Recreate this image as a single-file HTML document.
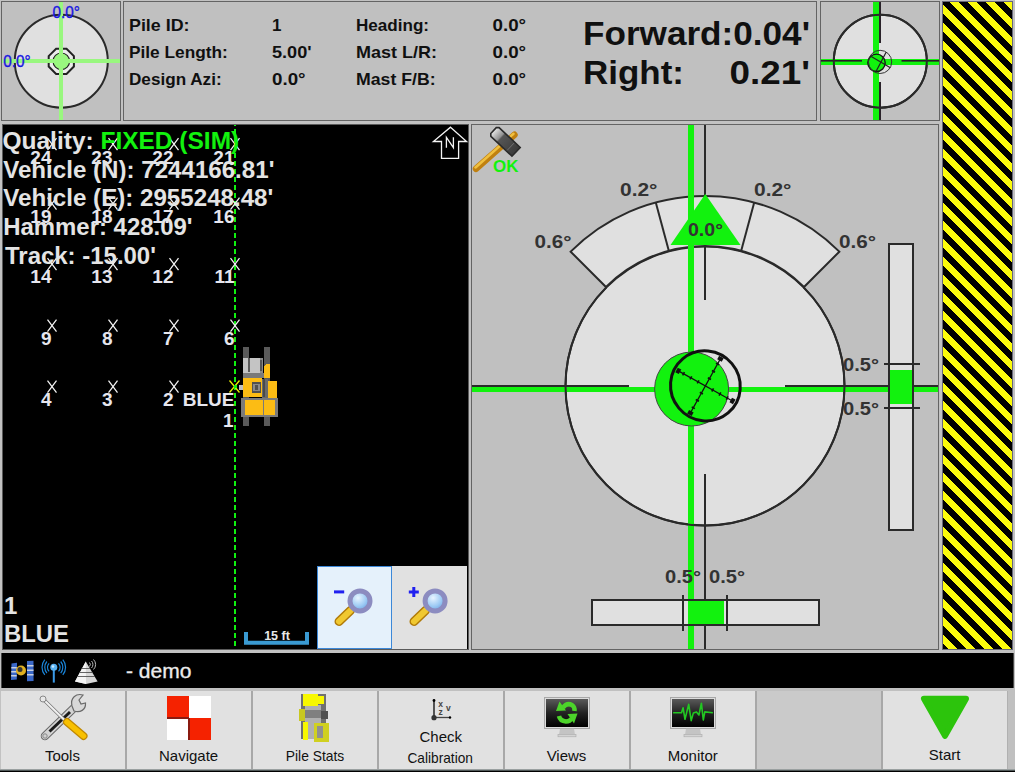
<!DOCTYPE html>
<html><head><meta charset="utf-8">
<style>
html,body{margin:0;padding:0;background:#c2c2c2;width:1015px;height:772px;overflow:hidden}
svg{display:block}
text{font-family:"Liberation Sans",sans-serif}
</style></head>
<body>
<svg width="1015" height="772" viewBox="0 0 1015 772" shape-rendering="crispEdges">
<defs>
<pattern id="haz" patternUnits="userSpaceOnUse" width="18" height="18" x="929" y="0">
<rect width="18" height="18" fill="#000"/>
<polygon points="0,0 9,0 18,9 18,18 0,0" fill="#fcfc0c"/>
<polygon points="0,9 9,18 0,18" fill="#fcfc0c"/>
</pattern>
</defs>
<rect x="0" y="0" width="1015" height="772" fill="#c2c2c2"/>

<!-- TOP PANEL 1 -->
<g id="p1">
<rect x="1.5" y="1.5" width="119" height="119" fill="#c0c0c0" stroke="#646464" stroke-width="1"/>
<circle cx="61.3" cy="61.2" r="46.5" fill="#e0e0e0" stroke="#2a2a2a" stroke-width="2" shape-rendering="auto"/>
<g shape-rendering="auto">
<polygon points="66.5,48.7 73.9,56.1 73.9,66.5 66.5,73.9 56.1,73.9 48.7,66.5 48.7,56.1 56.1,48.7" fill="#ececec" stroke="#222" stroke-width="2"/>
<circle cx="61.3" cy="61.3" r="8.3" fill="#99f77f" stroke="#222" stroke-width="1.1"/>
</g>
<rect x="59" y="2" width="4" height="118" fill="#99f77f"/>
<rect x="2" y="59" width="118" height="4" fill="#99f77f"/>
<text x="52.5" y="18.3" font-size="17" fill="#1818e0" stroke="#1818e0" stroke-width="0.35" textLength="27.5" lengthAdjust="spacingAndGlyphs" shape-rendering="auto">0.0°</text>
<text x="3.2" y="67" font-size="17" fill="#1818e0" stroke="#1818e0" stroke-width="0.35" textLength="27.5" lengthAdjust="spacingAndGlyphs" shape-rendering="auto">0.0°</text>
</g>


<!-- TOP PANEL 2 -->
<g id="p2" fill="#101010" font-weight="bold" font-size="17" shape-rendering="auto">
<rect x="123.5" y="1.5" width="693" height="119" fill="#c0c0c0" stroke="#646464" stroke-width="1" shape-rendering="crispEdges"/>
<text x="129" y="30.7" textLength="60.5" lengthAdjust="spacingAndGlyphs">Pile ID:</text>
<text x="129" y="57.8" textLength="98.8" lengthAdjust="spacingAndGlyphs">Pile Length:</text>
<text x="129" y="85" textLength="92.6" lengthAdjust="spacingAndGlyphs">Design Azi:</text>
<text x="272" y="30.7">1</text>
<text x="272" y="57.8" textLength="39.6" lengthAdjust="spacingAndGlyphs">5.00'</text>
<text x="272" y="85" textLength="33.6" lengthAdjust="spacingAndGlyphs">0.0°</text>
<text x="356" y="30.7" textLength="73" lengthAdjust="spacingAndGlyphs">Heading:</text>
<text x="356" y="57.8" textLength="81" lengthAdjust="spacingAndGlyphs">Mast L/R:</text>
<text x="356" y="85" textLength="79.6" lengthAdjust="spacingAndGlyphs">Mast F/B:</text>
<text x="492.5" y="30.7" textLength="33.6" lengthAdjust="spacingAndGlyphs">0.0°</text>
<text x="492.5" y="57.8" textLength="33.6" lengthAdjust="spacingAndGlyphs">0.0°</text>
<text x="492.5" y="85" textLength="33.6" lengthAdjust="spacingAndGlyphs">0.0°</text>
<text x="583" y="44.5" font-size="34" textLength="227" lengthAdjust="spacingAndGlyphs">Forward:0.04'</text>
<text x="583" y="84" font-size="34" textLength="101" lengthAdjust="spacingAndGlyphs">Right:</text>
<text x="729.5" y="84" font-size="34" textLength="80.5" lengthAdjust="spacingAndGlyphs">0.21'</text>
</g>

<!-- TOP PANEL 3 -->
<g id="p3">
<rect x="820.5" y="1.5" width="119" height="119" fill="#c0c0c0" stroke="#646464" stroke-width="1"/>
<circle cx="880.3" cy="61.2" r="46.5" fill="#e0e0e0" stroke="#2a2a2a" stroke-width="2" shape-rendering="auto"/>
<rect x="873" y="2" width="6" height="118" fill="#12f20e"/>
<rect x="821" y="59" width="118" height="6" fill="#12f20e"/>
<rect x="879" y="2" width="2" height="41" fill="#2a222a"/>
<rect x="879" y="82" width="2" height="38" fill="#2a222a"/>
<g shape-rendering="auto">
<rect x="821" y="60" width="41" height="1.6" fill="#2a1a2a"/>
<rect x="901.5" y="60" width="37.5" height="1.6" fill="#2a1a2a"/>
</g>
<circle cx="880.3" cy="61.2" r="46.5" fill="none" stroke="#2a2a2a" stroke-width="2" shape-rendering="auto"/>
<g shape-rendering="auto">
<circle cx="876.5" cy="62.8" r="8.7" fill="#12f20e" stroke="#151515" stroke-width="1.4"/>
<circle cx="880.1" cy="61.9" r="11.6" fill="none" stroke="#333" stroke-width="1"/>
<line x1="870.4" y1="55.9" x2="890.4" y2="67.7" stroke="#222" stroke-width="1.2"/>
<line x1="886.1" y1="52.3" x2="875.6" y2="72.2" stroke="#222" stroke-width="1.2"/>
</g>
</g>

<!-- HAZARD -->
<rect x="942.5" y="1.5" width="70" height="648" fill="url(#haz)" stroke="#686878" stroke-width="1"/>


<!-- MAP PANEL -->
<g id="map">
<rect x="2" y="124" width="467" height="526" fill="#5a5a5a"/>
<rect x="3" y="125" width="465" height="524" fill="#000"/>
<line x1="235" y1="125" x2="235" y2="649" stroke="#10f010" stroke-width="2" stroke-dasharray="5 3" stroke-dashoffset="4"/>
<g stroke="#f4f4f4" stroke-width="1.25" fill="none" shape-rendering="auto"><path d="M47.5,138.2 L56.5,150.2 M56.5,138.2 L47.5,150.2"/><path d="M108.5,138.2 L117.5,150.2 M117.5,138.2 L108.5,150.2"/><path d="M169.5,138.2 L178.5,150.2 M178.5,138.2 L169.5,150.2"/><path d="M230.5,138.2 L239.5,150.2 M239.5,138.2 L230.5,150.2"/><path d="M47.5,197.5 L56.5,209.5 M56.5,197.5 L47.5,209.5"/><path d="M108.5,197.5 L117.5,209.5 M117.5,197.5 L108.5,209.5"/><path d="M169.5,197.5 L178.5,209.5 M178.5,197.5 L169.5,209.5"/><path d="M230.5,197.5 L239.5,209.5 M239.5,197.5 L230.5,209.5"/><path d="M47.5,258 L56.5,270 M56.5,258 L47.5,270"/><path d="M108.5,258 L117.5,270 M117.5,258 L108.5,270"/><path d="M169.5,258 L178.5,270 M178.5,258 L169.5,270"/><path d="M230.5,258 L239.5,270 M239.5,258 L230.5,270"/><path d="M47.5,319.5 L56.5,331.5 M56.5,319.5 L47.5,331.5"/><path d="M108.5,319.5 L117.5,331.5 M117.5,319.5 L108.5,331.5"/><path d="M169.5,319.5 L178.5,331.5 M178.5,319.5 L169.5,331.5"/><path d="M230.5,319.5 L239.5,331.5 M239.5,319.5 L230.5,331.5"/><path d="M47.5,380.7 L56.5,392.7 M56.5,380.7 L47.5,392.7"/><path d="M108.5,380.7 L117.5,392.7 M117.5,380.7 L108.5,392.7"/><path d="M169.5,380.7 L178.5,392.7 M178.5,380.7 L169.5,392.7"/></g>
<g fill="#e6e6ee" font-size="19" font-weight="bold" text-anchor="end" shape-rendering="auto"><text x="51.5" y="163.5">24</text><text x="112.5" y="163.5">23</text><text x="173.5" y="163.5">22</text><text x="234.5" y="163.5">21</text><text x="51.5" y="222.8">19</text><text x="112.5" y="222.8">18</text><text x="173.5" y="222.8">17</text><text x="234.5" y="222.8">16</text><text x="51.5" y="283.3">14</text><text x="112.5" y="283.3">13</text><text x="173.5" y="283.3">12</text><text x="234.5" y="283.3">11</text><text x="51.5" y="344.8">9</text><text x="112.5" y="344.8">8</text><text x="173.5" y="344.8">7</text><text x="234.5" y="344.8">6</text><text x="51.5" y="406.0">4</text><text x="112.5" y="406.0">3</text><text x="173.5" y="406.0">2</text><text x="234.5" y="406.0" font-weight="bold">BLUE</text><text x="233.5" y="427.3">1</text></g>
<g fill="#e4e4e4" font-size="23.5" font-weight="bold" shape-rendering="auto">
<text x="2.5" y="149.3" textLength="236.7" lengthAdjust="spacingAndGlyphs">Quality: <tspan fill="#12f20e">FIXED (SIM)</tspan></text>
<text x="3.2" y="178.3" textLength="271.2" lengthAdjust="spacingAndGlyphs">Vehicle (N): 7244166.81'</text>
<text x="3.2" y="206.3" textLength="270.1" lengthAdjust="spacingAndGlyphs">Vehicle (E): 2955248.48'</text>
<text x="3.2" y="235.3" textLength="189.3" lengthAdjust="spacingAndGlyphs">Hammer: 428.09'</text>
<text x="5" y="264.2" textLength="150.9" lengthAdjust="spacingAndGlyphs">Track: -15.00'</text>
<text x="3.9" y="613.5" font-size="24">1</text>
<text x="3.9" y="641.7" font-size="23.5" textLength="65.1" lengthAdjust="spacingAndGlyphs">BLUE</text>
</g>
<g fill="none" stroke="#f4f4f4" stroke-width="1.3" shape-rendering="auto">
<path d="M450.5,127.2 L466.6,141.5 L458.6,141.5 L458.6,158.4 L441.5,158.4 L441.5,141.5 L433.4,141.5 Z"/>
<path d="M446.4,147.8 L446.4,137.4 L453.4,147.6 L453.4,137.2"/>
</g>
<path d="M246,632 L246,642.8 L307,642.8 L307,632" fill="none" stroke="#3a9ad2" stroke-width="4" shape-rendering="auto"/>
<text x="277" y="640.2" font-size="12.5" font-weight="bold" fill="#e8e8e8" text-anchor="middle" shape-rendering="auto">15 ft</text>
<rect x="317.5" y="566.5" width="74" height="82" fill="#e5f1fb" stroke="#3c88d8" stroke-width="1"/>
<rect x="392" y="566" width="75" height="83" fill="#e1e1e1"/>
</g>

<g id="vehicle">
<rect x="243" y="347" width="6" height="79" fill="#5a5a5a"/>
<rect x="264" y="347" width="6" height="79" fill="#5a5a5a"/>
<rect x="243" y="358" width="19.5" height="15.5" fill="#c4c4c4"/>
<rect x="248" y="358" width="2" height="14" fill="#5a5a5a"/>
<rect x="259.5" y="358" width="3" height="15.5" fill="#8a8a8a"/>
<rect x="260" y="360" width="1.5" height="11" fill="#555"/>
<rect x="243" y="373" width="27" height="5" fill="#7a7a7a"/>
<polygon points="263.5,367 266.5,364 270,364 270,377.5 263.5,377.5" fill="#fcbc14"/>
<rect x="243" y="378" width="19" height="18.5" fill="#fcbc14"/>
<rect x="261.5" y="378.5" width="6" height="19" fill="#6a6a6a"/>
<rect x="263" y="379" width="1.5" height="18" fill="#4a4a4a"/>
<rect x="267.5" y="380.7" width="9.5" height="17" fill="#fcbc14"/>
<rect x="251.5" y="382" width="9.5" height="11" fill="#505050"/>
<rect x="253" y="384" width="6.5" height="7" fill="#8a8a8a"/>
<rect x="254.5" y="385" width="3.5" height="5" fill="#505050"/>
<rect x="241" y="397.5" width="36.5" height="19.5" fill="#7a7a7a"/>
<rect x="244.5" y="399.5" width="30" height="15.5" fill="#fcbc14"/>
<rect x="263" y="399.5" width="1.2" height="15.5" fill="#7a7a7a"/>
<rect x="238.6" y="385.2" width="4.4" height="4.5" fill="#c0c0c0"/>
<g stroke="#e8f000" stroke-width="1.3" shape-rendering="auto">
<path d="M229.5,380.5 L239.5,392.5 M239.5,380.5 L229.5,392.5"/>
</g>
<rect x="233.5" y="385" width="3" height="3" fill="#10f010"/>
</g>

<g id="dial">
<rect x="471.5" y="124.5" width="467" height="525" fill="#c0c0c0" stroke="#646464" stroke-width="1"/>
<g shape-rendering="auto">
<circle cx="705" cy="386" r="139.5" fill="#e0e0e0" stroke="#2a2a2a" stroke-width="2"/>
</g>
<rect x="704" y="125" width="2" height="175" fill="#2a2a2a"/>
<rect x="704" y="474" width="2" height="175" fill="#2a2a2a"/>
<rect x="472" y="385" width="157" height="2" fill="#2a2a2a"/>
<rect x="785" y="385" width="153" height="2" fill="#2a2a2a"/>
<g shape-rendering="auto">
<path d="M570.65,251.65 A190,190 0 0 1 839.35,251.65 L804,287 A140,140 0 0 0 606,287 Z" fill="#e0e0e0" stroke="#2a2a2a" stroke-width="2" stroke-linejoin="miter"/>
<line x1="655.8" y1="202.5" x2="668.8" y2="250.8" stroke="#2a2a2a" stroke-width="2"/>
<line x1="754.2" y1="202.5" x2="741.2" y2="250.8" stroke="#2a2a2a" stroke-width="2"/>
</g>
<rect x="688" y="125" width="6" height="524" fill="#12f20e"/>
<rect x="472" y="387" width="466" height="5" fill="#12f20e"/>
<path d="M803.6,287.4 A139.5,139.5 0 1 1 606.4,287.4" fill="none" stroke="#2a2a2a" stroke-width="2" shape-rendering="auto"/>
<polygon points="705.3,194 740.5,245 670.5,245" fill="#12f20e" shape-rendering="auto"/>
<g font-weight="bold" font-size="18.5" fill="#333" shape-rendering="auto">
<text x="620" y="196" textLength="37.5" lengthAdjust="spacingAndGlyphs">0.2°</text>
<text x="754" y="196" textLength="37.5" lengthAdjust="spacingAndGlyphs">0.2°</text>
<text x="534.5" y="248" textLength="37" lengthAdjust="spacingAndGlyphs">0.6°</text>
<text x="839" y="248" textLength="37" lengthAdjust="spacingAndGlyphs">0.6°</text>
<text x="688" y="235.7" font-size="18.5" textLength="35" lengthAdjust="spacingAndGlyphs">0.0°</text>
<text x="843" y="371" textLength="36" lengthAdjust="spacingAndGlyphs">0.5°</text>
<text x="843" y="415" textLength="36" lengthAdjust="spacingAndGlyphs">0.5°</text>
<text x="665" y="583.4" textLength="36" lengthAdjust="spacingAndGlyphs">0.5°</text>
<text x="709" y="583.4" textLength="36" lengthAdjust="spacingAndGlyphs">0.5°</text>
</g>
<g shape-rendering="auto">
<circle cx="691.6" cy="389" r="37" fill="#12f20e" stroke="#444" stroke-width="1"/>
<g transform="translate(705.4,385.9)">
<ellipse cx="0" cy="0" rx="35.3" ry="34.6" transform="rotate(50)" fill="none" stroke="#111" stroke-width="3"/>
<g transform="rotate(29)">
<line x1="-32" y1="0" x2="32" y2="0" stroke="#111" stroke-width="1.2"/>
<line x1="0" y1="-32" x2="0" y2="32" stroke="#111" stroke-width="1.2"/>
<g fill="#111"><rect x="-33" y="-2.6" width="4" height="5.2"/><rect x="29" y="-2.6" width="4" height="5.2"/><rect x="-2.6" y="-33" width="5.2" height="4"/><rect x="-2.6" y="29" width="5.2" height="4"/></g>
<g stroke="#111" stroke-width="1.6"><line x1="-8.3" y1="-1.8" x2="-8.3" y2="1.8"/><line x1="-1.8" y1="-8.3" x2="1.8" y2="-8.3"/><line x1="8.3" y1="-1.8" x2="8.3" y2="1.8"/><line x1="-1.8" y1="8.3" x2="1.8" y2="8.3"/><line x1="-16.6" y1="-1.8" x2="-16.6" y2="1.8"/><line x1="-1.8" y1="-16.6" x2="1.8" y2="-16.6"/><line x1="16.6" y1="-1.8" x2="16.6" y2="1.8"/><line x1="-1.8" y1="16.6" x2="1.8" y2="16.6"/><line x1="-25" y1="-1.8" x2="-25" y2="1.8"/><line x1="-1.8" y1="-25" x2="1.8" y2="-25"/><line x1="25" y1="-1.8" x2="25" y2="1.8"/><line x1="-1.8" y1="25" x2="1.8" y2="25"/></g>
</g>
</g>
</g>
<rect x="889" y="244" width="24" height="286" fill="#e0e0e0" stroke="#2a2a2a" stroke-width="2"/>
<rect x="890" y="370" width="22" height="34" fill="#12f20e"/>
<rect x="884" y="363" width="36" height="2" fill="#2a2a2a"/>
<rect x="884" y="407" width="36" height="2" fill="#2a2a2a"/>
<rect x="592" y="600" width="227" height="25" fill="#e0e0e0" stroke="#2a2a2a" stroke-width="2"/>
<rect x="688" y="601" width="36" height="23" fill="#12f20e"/>
<rect x="682" y="595" width="2" height="36" fill="#2a2a2a"/>
<rect x="726" y="595" width="2" height="36" fill="#2a2a2a"/>
<text x="493" y="172" font-size="17" font-weight="bold" fill="#12f20e" shape-rendering="auto">OK</text>
</g>

<!-- STATUS BAR -->
<rect x="1" y="653" width="1013" height="36" fill="#4a4a4a"/>
<rect x="2" y="653" width="1011" height="35" fill="#000"/>
<text x="126" y="678.2" font-size="19.5" fill="#ececec" stroke="#ececec" stroke-width="0.3" textLength="65.5" lengthAdjust="spacingAndGlyphs">- demo</text>


<!-- TOOLBAR -->
<g id="toolbar">
<rect x="0" y="688" width="1015" height="3" fill="#c0c0c0"/>
<rect x="1" y="691" width="1007" height="78" fill="#e1e1e1"/>
<rect x="1008" y="688" width="7" height="81" fill="#c0c0c0"/>
<rect x="756" y="691" width="126" height="78" fill="#cacaca"/>
<rect x="125" y="691" width="2" height="78" fill="#a8a8a8"/>
<rect x="251" y="691" width="2" height="78" fill="#a8a8a8"/>
<rect x="377" y="691" width="2" height="78" fill="#a8a8a8"/>
<rect x="503" y="691" width="2" height="78" fill="#a8a8a8"/>
<rect x="629" y="691" width="2" height="78" fill="#a8a8a8"/>
<rect x="755" y="691" width="2" height="78" fill="#a8a8a8"/>
<rect x="881" y="691" width="2" height="78" fill="#a8a8a8"/>
<rect x="1007" y="691" width="1" height="78" fill="#b0b0b0"/>
<rect x="0" y="769" width="1015" height="1" fill="#9aa0a0"/>
<rect x="0" y="770" width="1015" height="1" fill="#505858"/>
<rect x="0" y="771" width="1015" height="1" fill="#000"/>
<g font-size="15" fill="#111" text-anchor="middle" shape-rendering="auto">
<text x="62.4" y="760.5">Tools</text>
<text x="188.6" y="760.6">Navigate</text>
<text x="315" y="760.7" textLength="58.5" lengthAdjust="spacingAndGlyphs">Pile Stats</text>
<text x="440.8" y="742.4">Check</text>
<text x="440.2" y="762.5" textLength="65.5" lengthAdjust="spacingAndGlyphs">Calibration</text>
<text x="566.5" y="760.7">Views</text>
<text x="692.8" y="760.7">Monitor</text>
<text x="944.6" y="759.6">Start</text>
</g>
</g>

<g id="icons" shape-rendering="auto">
<defs>
<linearGradient id="gold" x1="0" y1="0" x2="1" y2="1">
<stop offset="0" stop-color="#f8d050"/><stop offset="0.5" stop-color="#e0a020"/><stop offset="1" stop-color="#a06010"/>
</linearGradient>
<linearGradient id="headg" x1="0" y1="0" x2="1" y2="0">
<stop offset="0" stop-color="#e8e8e8"/><stop offset="0.3" stop-color="#909090"/><stop offset="0.35" stop-color="#555"/><stop offset="1" stop-color="#3a3a3a"/>
</linearGradient>
<linearGradient id="scr" x1="0" y1="0" x2="0" y2="1">
<stop offset="0" stop-color="#5a5a5a"/><stop offset="0.5" stop-color="#222"/><stop offset="1" stop-color="#000"/>
</linearGradient>
<radialGradient id="glass" cx="0.4" cy="0.35" r="0.7">
<stop offset="0" stop-color="#e8f4ff"/><stop offset="0.6" stop-color="#9ccaf4"/><stop offset="1" stop-color="#6aa0e0"/>
</radialGradient>
<linearGradient id="yhandle" x1="0" y1="0" x2="1" y2="0">
<stop offset="0" stop-color="#c89010"/><stop offset="0.4" stop-color="#ffe060"/><stop offset="1" stop-color="#b07a08"/>
</linearGradient>
</defs>
<!-- hammer -->
<line x1="476" y1="168.8" x2="514.5" y2="134.8" stroke="#c08010" stroke-width="6.5" stroke-linecap="round"/>
<line x1="475.5" y1="167.5" x2="513.5" y2="133.8" stroke="#f0c040" stroke-width="2.5" stroke-linecap="round"/>
<g transform="translate(504.8,141.2) rotate(43.3)">
<polygon points="-15.5,-4 -13.5,-6 15.5,-6 15.5,6 -13.5,6 -15.5,4" fill="url(#headg)" stroke="#2a2a2a" stroke-width="1.6"/>
<line x1="8" y1="-5" x2="8" y2="5" stroke="#777" stroke-width="0.8"/>
</g>
<!-- zoom out magnifier -->
<g>
<line x1="339" y1="621.5" x2="350.5" y2="610.5" stroke="#b07a08" stroke-width="9" stroke-linecap="round"/>
<line x1="339" y1="621.5" x2="350.5" y2="610.5" stroke="#f0c830" stroke-width="6" stroke-linecap="round"/>
<circle cx="360" cy="600.9" r="10" fill="url(#glass)" stroke="#8c8cc0" stroke-width="5"/>
<rect x="334" y="590.4" width="10.2" height="3" fill="#2020f0"/>
</g>
<g>
<line x1="414" y1="621.5" x2="425.5" y2="610.5" stroke="#b07a08" stroke-width="9" stroke-linecap="round"/>
<line x1="414" y1="621.5" x2="425.5" y2="610.5" stroke="#f0c830" stroke-width="6" stroke-linecap="round"/>
<circle cx="435.1" cy="600.9" r="10" fill="url(#glass)" stroke="#8c8cc0" stroke-width="5"/>
<rect x="408.8" y="590.5" width="10" height="3" fill="#2020f0"/>
<rect x="412.3" y="587" width="3" height="10" fill="#2020f0"/>
</g>
<!-- status icons -->
<g>
<polygon points="11.5,663.5 17,662.8 16.8,679.5 11,680" fill="#3a68c8"/>
<polygon points="27,661 33.5,660.8 33.6,681 27,681.2" fill="#3a68c8"/>
<g fill="#c8d0e0"><rect x="11.3" y="667" width="5.5" height="1.5"/><rect x="11.2" y="671" width="5.5" height="1.5"/><rect x="11.1" y="675" width="5.6" height="1.5"/>
<rect x="27" y="665" width="6.5" height="1.5"/><rect x="27" y="669.5" width="6.5" height="1.5"/><rect x="27" y="674" width="6.5" height="1.5"/></g>
<circle cx="21" cy="670.5" r="5" fill="#e0b020"/>
<circle cx="20" cy="669.5" r="2.5" fill="#333"/>
</g>
<g fill="none" stroke="#1a84d8" stroke-width="1.2"><path d="M49.1,663.3 A6.2,6.2 0 0 0 49.1,671.3"/><path d="M58.5,663.3 A6.2,6.2 0 0 1 58.5,671.3"/><path d="M46.9,661.5 A9.0,9.0 0 0 0 46.9,673.1"/><path d="M60.7,661.5 A9.0,9.0 0 0 1 60.7,673.1"/><path d="M44.8,659.7 A11.8,11.8 0 0 0 44.8,674.9"/><path d="M62.8,659.7 A11.8,11.8 0 0 1 62.8,674.9"/></g>
<line x1="53.8" y1="668" x2="53.8" y2="682.6" stroke="#3a9ae8" stroke-width="2"/>
<circle cx="53.8" cy="667.3" r="3.5" fill="#58b0f0"/>
<circle cx="53" cy="666.5" r="1.3" fill="#c8e8ff"/>
<g>
<polygon points="85.8,661.5 97.6,681.6 86,684 75,681.6" fill="#d8d8d8"/>
<polygon points="85.8,661.5 86,684 75,681.6" fill="#f4f4f4"/>
<g stroke="#555" stroke-width="0.9"><line x1="81.5" y1="668.5" x2="90" y2="668.5"/><line x1="79.5" y1="672.5" x2="92.5" y2="672.5"/><line x1="77.5" y1="676.5" x2="95" y2="676.5"/></g>
<g fill="none" stroke="#bbb" stroke-width="1"><path d="M89.5,662.5 A3,3 0 0 1 89.5,666.5"/><path d="M91.5,661 A5,5 0 0 1 91.5,668"/><path d="M93.5,659.5 A7,7 0 0 1 93.5,669.5"/></g>
</g>
<!-- tools -->
<g>
<line x1="45" y1="736" x2="76" y2="706" stroke="#6a6a6a" stroke-width="8.5" stroke-linecap="round"/>
<line x1="45" y1="736" x2="76" y2="706" stroke="#d4d4d4" stroke-width="6.5" stroke-linecap="round"/>
<line x1="49.5" y1="731.5" x2="70" y2="712" stroke="#1a1a1a" stroke-width="3"/>
<circle cx="45" cy="736" r="2.2" fill="#d0d0d0" stroke="#888" stroke-width="1"/>
<path d="M72,706 C70,698 76,693 83,695 L79,700 L81,704 L85.5,703 C86,710 80,713 74,711 Z" fill="#d8d8d8" stroke="#6a6a6a" stroke-width="1.2"/>
<line x1="43" y1="699" x2="66" y2="721.5" stroke="#777" stroke-width="3.5" stroke-linecap="round"/>
<line x1="43" y1="699" x2="66" y2="721.5" stroke="#f0f0f0" stroke-width="2" stroke-linecap="round"/>
<circle cx="43" cy="699" r="3" fill="#e8e8e8" stroke="#888" stroke-width="1"/>
<line x1="67" y1="722" x2="83.5" y2="736" stroke="#c08800" stroke-width="8" stroke-linecap="round"/>
<line x1="67" y1="722" x2="83.5" y2="736" stroke="#f8c000" stroke-width="5.5" stroke-linecap="round"/>
</g>
<!-- navigate -->
<g shape-rendering="crispEdges">
<rect x="167" y="696" width="22" height="22" fill="#f52200"/>
<rect x="189" y="696" width="22" height="22" fill="#ffffff"/>
<rect x="167" y="718" width="22" height="22" fill="#ffffff"/>
<rect x="189" y="718" width="22" height="22" fill="#f52200"/>
<rect x="188" y="718" width="2" height="22" fill="#8a1a10"/>
<rect x="167" y="717" width="22" height="2" fill="#8a1a10"/>
</g>
<!-- pile stats -->
<g shape-rendering="crispEdges">
<rect x="301" y="694.3" width="25" height="44.8" fill="#707070"/>
<rect x="305" y="705" width="16" height="34" fill="#b0b0b0"/>
<rect x="302.8" y="694.3" width="15" height="11.4" fill="#f8f800"/>
<rect x="317.8" y="696.4" width="6" height="7.1" fill="#f8f800"/>
<rect x="299" y="709.2" width="6" height="11.4" fill="#c8c820"/>
<rect x="305" y="710" width="15.6" height="7.8" fill="#808080"/>
<rect x="321.3" y="711.4" width="6.8" height="7.1" fill="#505050"/>
<rect x="303.2" y="722" width="5" height="17.5" fill="#f8f800"/>
<rect x="314.2" y="723.1" width="14.6" height="18.5" fill="#d0d020"/>
<rect x="317" y="725.6" width="6.1" height="12.8" fill="#909090"/>
</g>
<!-- check calibration -->
<g>
<line x1="434" y1="700.5" x2="434" y2="717.5" stroke="#444" stroke-width="1.8"/>
<line x1="434" y1="717.5" x2="450" y2="717.5" stroke="#444" stroke-width="1.3"/>
<circle cx="434" cy="700.5" r="1.4" fill="#000"/>
<circle cx="450" cy="717.5" r="1.2" fill="#000"/>
<circle cx="434" cy="717.7" r="2.6" fill="#333"/>
<text x="440.5" y="707" font-size="8.5" font-weight="bold" fill="#444" text-anchor="middle">x</text>
<text x="440.5" y="715.2" font-size="8.5" font-weight="bold" fill="#444" text-anchor="middle">z</text>
<text x="448.4" y="711" font-size="8.5" font-weight="bold" fill="#444" text-anchor="middle">v</text>
</g>
<!-- views & monitor -->
<g id="mon1">
<rect x="544.5" y="697.5" width="45" height="31" fill="#dcdcdc" stroke="#a8a8a8" stroke-width="1"/>
<rect x="546" y="699" width="42" height="28" fill="url(#scr)"/>
<polygon points="560,728.7 574,728.7 575,734.8 559,734.8" fill="#c4c4c4"/>
<rect x="558" y="734.5" width="18" height="2.3" fill="#d4d4d4" stroke="#aaa" stroke-width="0.6"/>
</g>
<use href="#mon1" x="126" y="0"/>
<g fill="none" stroke="#4cd42a" stroke-width="4.5" stroke-linecap="butt">
<path d="M563,707.5 Q567,702.5 572,705 Q575,707 574.5,711"/>
<path d="M559,716 Q560,721 566,721.5 Q570,721.5 571.5,718.5"/>
</g>
<g fill="#4cd42a">
<polygon points="559.5,701.5 556,711 566,710.5"/>
<polygon points="574,723.5 577.5,713.5 567.5,714"/>
</g>
<polyline points="673.1,712.8 681.5,712.8 683.1,707.8 685.0,719.3 686.8,711.9 688.7,704.4 691.2,720.6 693.3,713.1 696.5,711.9 698.9,715.0 701.4,703.2 703.3,720.0 704.8,711.9 712.9,712.8" fill="none" stroke="#22c822" stroke-width="1.6" stroke-linejoin="round"/>
<!-- start -->
<polygon points="924,698.7 966,698.7 945,735.8" fill="#2cc40c" stroke="#2cc40c" stroke-width="6" stroke-linejoin="round"/>
</g>

</svg>
</body></html>
